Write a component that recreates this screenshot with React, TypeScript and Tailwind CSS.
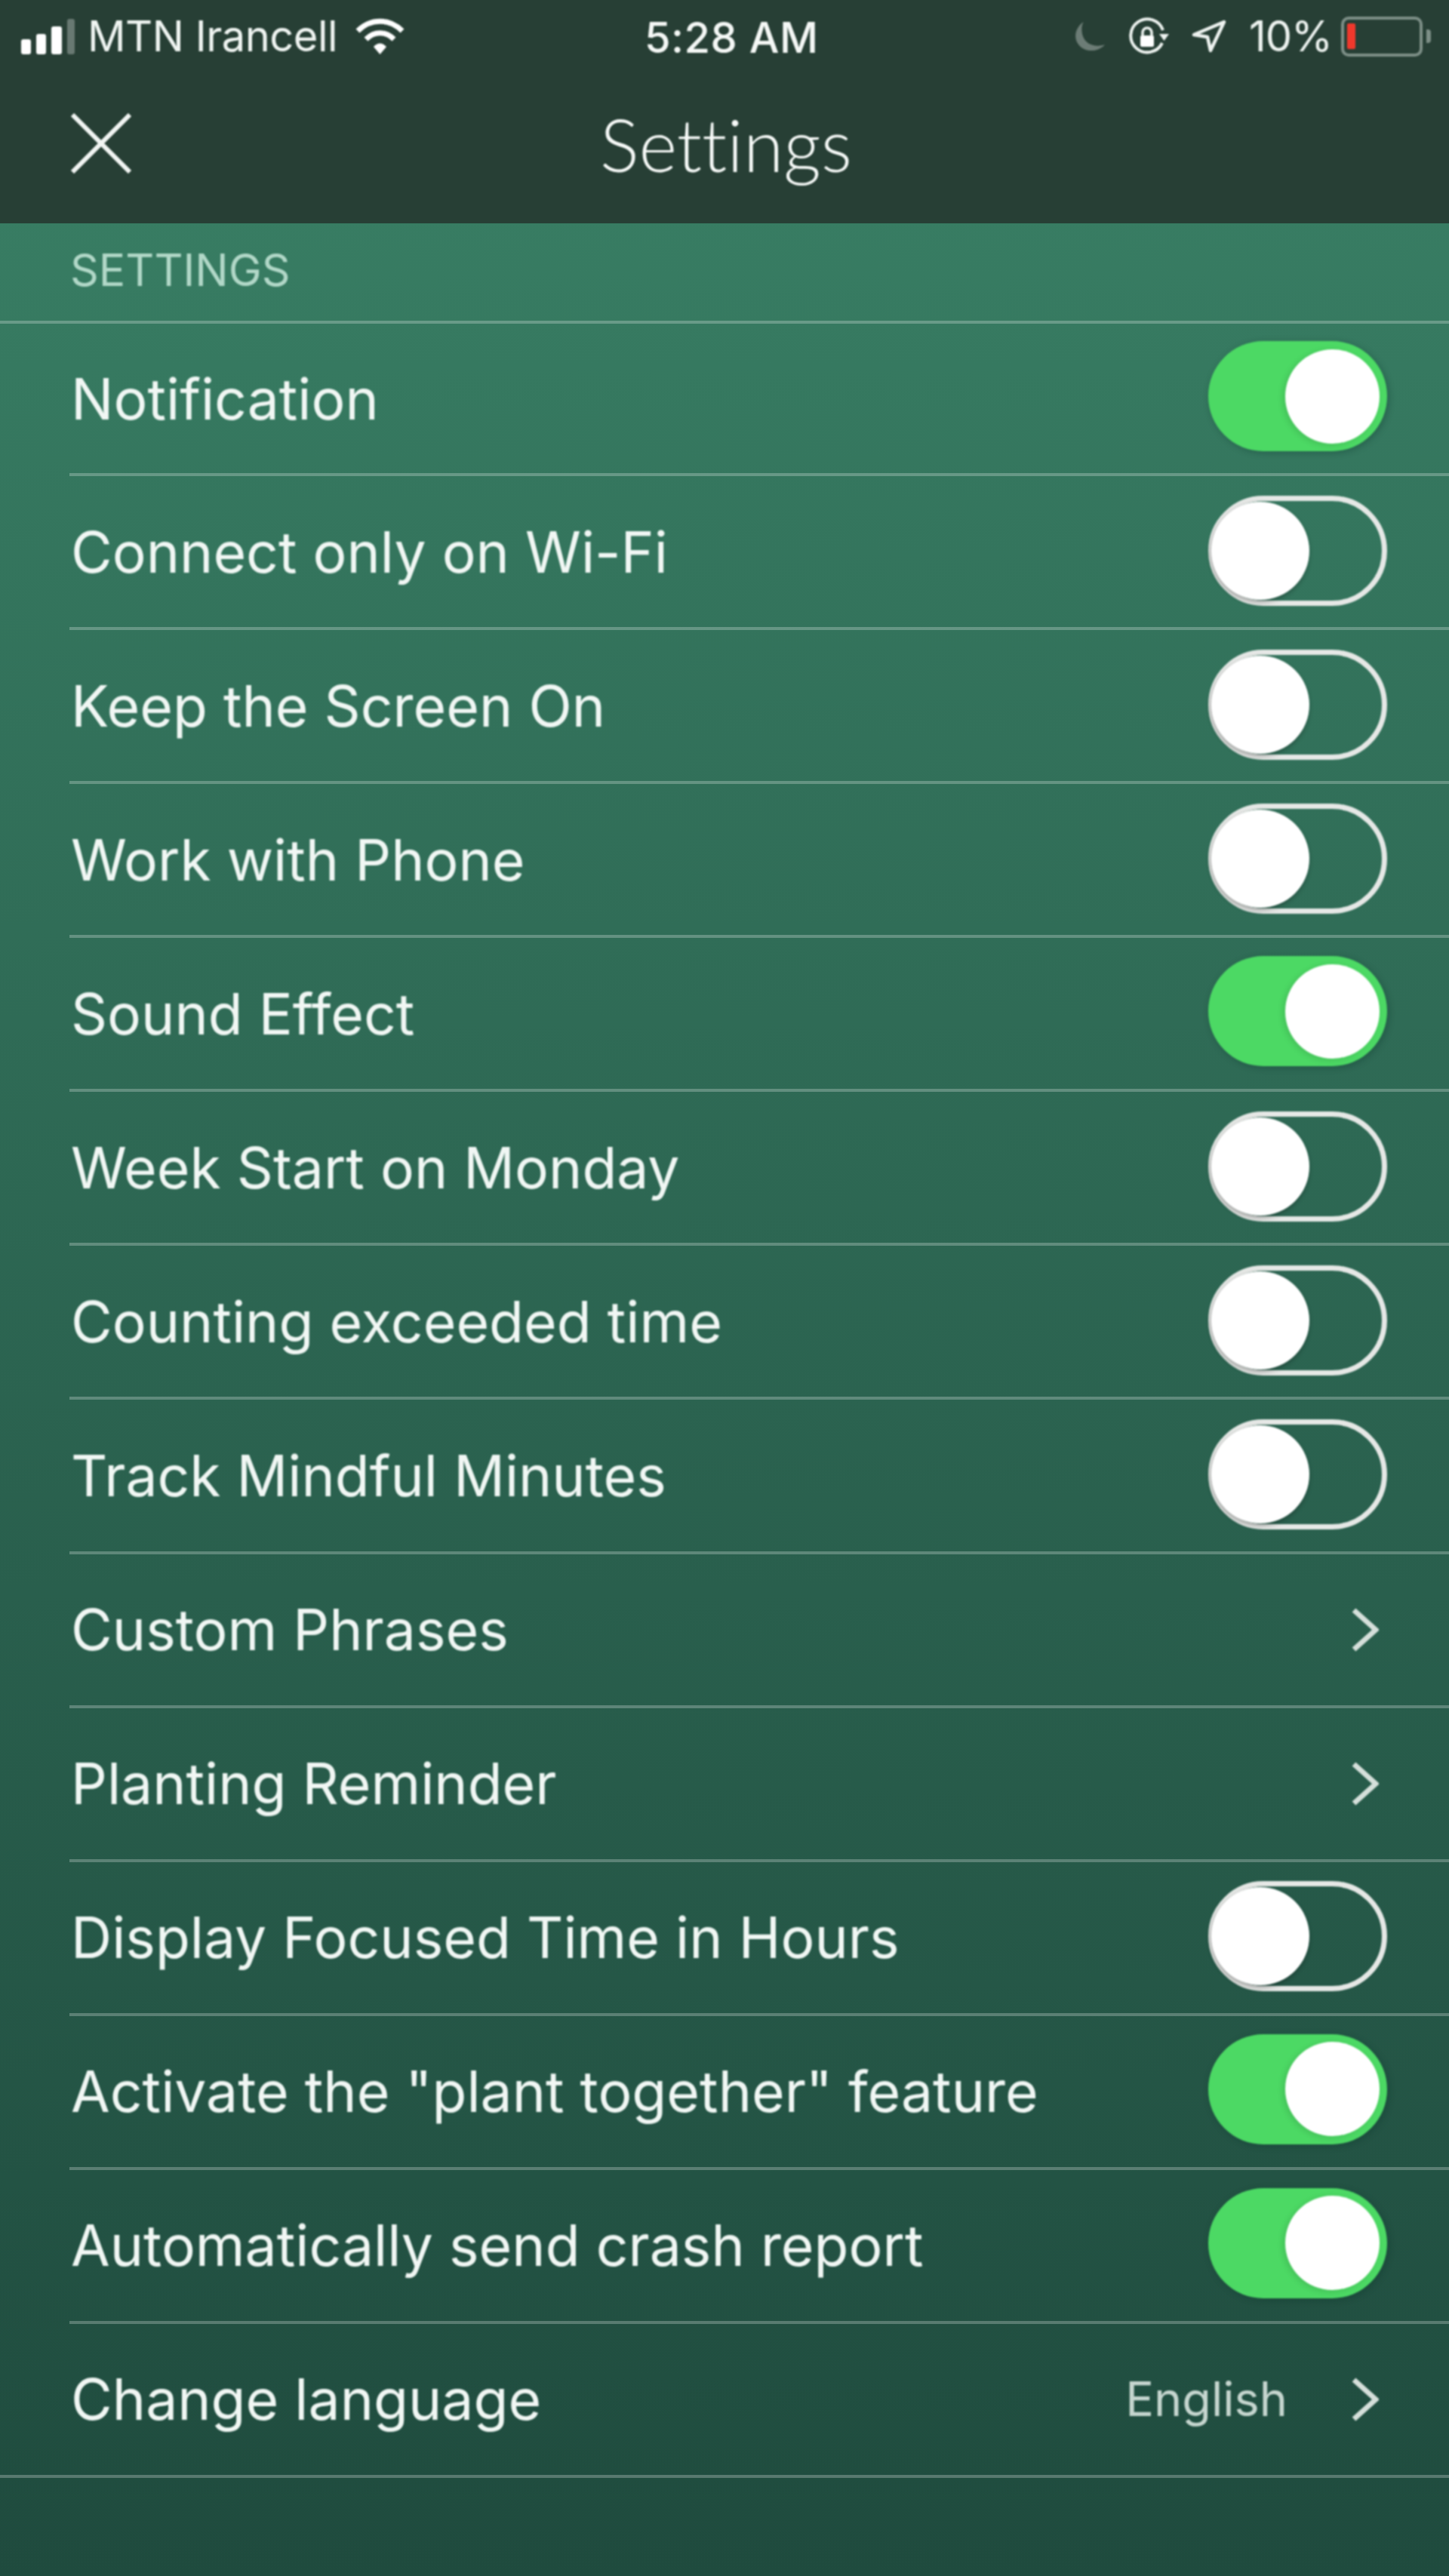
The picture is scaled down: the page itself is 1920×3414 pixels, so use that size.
const soft = 'blur-[1px]';

type Row = { label: string; kind: 'on' | 'off' | 'link'; value?: string };

const rows: Row[] = [
  { label: 'Notification', kind: 'on' },
  { label: 'Connect only on Wi-Fi', kind: 'off' },
  { label: 'Keep the Screen On', kind: 'off' },
  { label: 'Work with Phone', kind: 'off' },
  { label: 'Sound Effect', kind: 'on' },
  { label: 'Week Start on Monday', kind: 'off' },
  { label: 'Counting exceeded time', kind: 'off' },
  { label: 'Track Mindful Minutes', kind: 'off' },
  { label: 'Custom Phrases', kind: 'link' },
  { label: 'Planting Reminder', kind: 'link' },
  { label: 'Display Focused Time in Hours', kind: 'off' },
  { label: 'Activate the "plant together" feature', kind: 'on' },
  { label: 'Automatically send crash report', kind: 'on' },
  { label: 'Change language', kind: 'link', value: 'English' },
];

const Toggle = ({ on }: { on: boolean }) =>
  on ? (
    <div className={`flex h-[146px] w-[237px] -mt-[6px] items-center justify-end rounded-full bg-[#4cd964] pr-[10px] shadow-[2px_2px_8px_rgba(10,50,40,0.35)] ${soft}`}>
      <div className="h-[125px] w-[125px] rounded-full bg-white shadow-[-3px_2px_8px_rgba(0,0,0,0.12)]" />
    </div>
  ) : (
    <div className={`flex h-[146px] w-[237px] -mt-[3px] items-center justify-start rounded-full border-[7px] border-[#e6e8e6] ${soft}`}>
      <div className="-ml-[3px] h-[130px] w-[130px] rounded-full bg-white shadow-[-1px_3px_6px_rgba(0,0,0,0.3)]" />
    </div>
  );

const Chevron = () => (
  <svg viewBox="0 0 36 58" className={`h-[58px] w-[36px] ${soft}`} fill="none" stroke="#d6e0db" strokeWidth="7">
    <path d="M3 3l29 26L3 55" />
  </svg>
);

const SignalBars = () => (
  <div className={`flex items-end gap-[7px] ${soft}`}>
    <div className="h-[20px] w-[13px] rounded-[3px] bg-white" />
    <div className="h-[27px] w-[13px] rounded-[3px] bg-white" />
    <div className="h-[37px] w-[14px] rounded-[3px] bg-white" />
    <div className="h-[47px] w-[10px] rounded-[3px] bg-white/30" />
  </div>
);

const Wifi = () => (
  <svg viewBox="0 0 65 49" className={`h-[49px] w-[65px] ${soft}`} fill="none" stroke="#fff" strokeWidth="7">
    <path d="M3 17C20 0 45 0 62 17" />
    <path d="M14 28C25 17 40 17 51 28" />
    <path d="M24 38l8.500 10L41 38C36 32 29 32 24 38Z" fill="#fff" stroke="none" />
  </svg>
);

const Moon = () => (
  <svg viewBox="0 0 44 42" className={`h-[41px] w-[43px] ${soft}`} fill="#fff" fillOpacity="0.32">
    <path d="M14 1C4 8 0 20 6 30c7 12 26 14 37 2-13 4-26 0-30-12C11 13 11 7 14 1Z" />
  </svg>
);

const RotationLock = () => (
  <svg viewBox="0 0 56 50" className={`h-[50px] w-[56px] ${soft}`} fill="none" stroke="#eef3f0" strokeWidth="4">
    <path d="M46 34A22 22 0 1 1 47 17" />
    <path d="M42 22h13l-6.500 9Z" fill="#eef3f0" stroke="none" />
    <rect x="17" y="24" width="18" height="15" rx="2" fill="#fff" stroke="none" />
    <path d="M20 25v-5a6 6 0 0 1 12 0v5" strokeWidth="3.500" />
  </svg>
);

const LocationArrow = () => (
  <svg viewBox="0 0 46 44" className={`h-[44px] w-[46px] ${soft}`} fill="none" stroke="#eef3f0" strokeWidth="4.500" strokeLinejoin="round">
    <path d="M43 3L3 20l18 3 4 18Z" />
  </svg>
);

const Battery = () => (
  <div className={`flex items-center gap-[5px] ${soft}`}>
    <div className="flex h-[53px] w-[108px] items-center rounded-[10px] border-[4px] border-[#7d8f87] pl-[4px]">
      <div className="h-[34px] w-[11px] rounded-[2px] bg-[#f0382c]" />
    </div>
    <div className="h-[18px] w-[6px] rounded-r-[4px] bg-[#7d8f87]" />
  </div>
);

export default function App() {
  return (
    <div className="flex h-[3414px] w-[1920px] flex-col overflow-hidden bg-gradient-to-b from-[#3a8166] to-[#1f4b3e] font-['Inter',sans-serif] text-white">
      {/* status bar + nav */}
      <div className="h-[296px] shrink-0 bg-[#273f35]">
        <div className="relative flex h-[96px] items-center justify-between pl-[28px] pr-[24px]">
          <div className="flex items-center">
            <SignalBars />
            <span className={`ml-[17px] text-[56px] leading-none tracking-[-0.5px] text-[#f0f5f2] ${soft}`}>MTN Irancell</span>
            <div className="ml-[24px]"><Wifi /></div>
          </div>
          <span className={`absolute left-[854px] top-[22px] text-[56px] font-medium leading-[56px] tracking-[0.5px] text-[#f5f8f6] ${soft}`}>5:28 AM</span>
          <div className="flex items-center">
            <Moon />
            <div className="ml-[29px]"><RotationLock /></div>
            <div className="ml-[29px]"><LocationArrow /></div>
            <span className={`ml-[30px] text-[56px] leading-none tracking-[-1px] text-[#eef3f0] ${soft}`}>10%</span>
            <div className="ml-[12px]"><Battery /></div>
          </div>
        </div>
        <div className="relative flex h-[200px] items-center justify-between pb-[12px] pl-[94px]">
          <svg viewBox="0 0 80 80" className={`h-[80px] w-[80px] ${soft}`} fill="none" stroke="#f2f5f3" strokeWidth="6">
            <path d="M2 2l76 76M78 2L2 78" />
          </svg>
          <span className={`absolute left-[795px] font-['Lato',sans-serif] text-[97px] font-light leading-none text-[#f7faf8] [font-variant-ligatures:none] ${soft}`}>Settings</span>
        </div>
      </div>

      {/* section header */}
      <div className="flex h-[133px] shrink-0 items-center border-b-4 border-white/25 pb-[6px] pl-[93px]">
        <span className={`text-[59px] leading-none text-[#b2d8c8] ${soft}`}>SETTINGS</span>
      </div>

      {rows.map((row, i) => (
        <div
          key={row.label}
          className={`flex shrink-0 items-center justify-between border-b-4 border-white/25 pr-[82px] ${
            i === 0 ? 'h-[202px]' : 'h-[204.08px]'
          } ${i === rows.length - 1 ? 'pl-[92px]' : 'ml-[92px]'}`}
        >
          <span className={`pl-[2px] text-[75px] leading-none text-[#f1f7f4] ${soft}`}>{row.label}</span>
          {row.kind === 'link' ? (
            <div className="flex items-center pr-[11px]">
              {row.value && <span className={`mr-[85px] text-[63px] leading-none text-[#c6d6cf] ${soft}`}>{row.value}</span>}
              <Chevron />
            </div>
          ) : (
            <Toggle on={row.kind === 'on'} />
          )}
        </div>
      ))}
    </div>
  );
}
